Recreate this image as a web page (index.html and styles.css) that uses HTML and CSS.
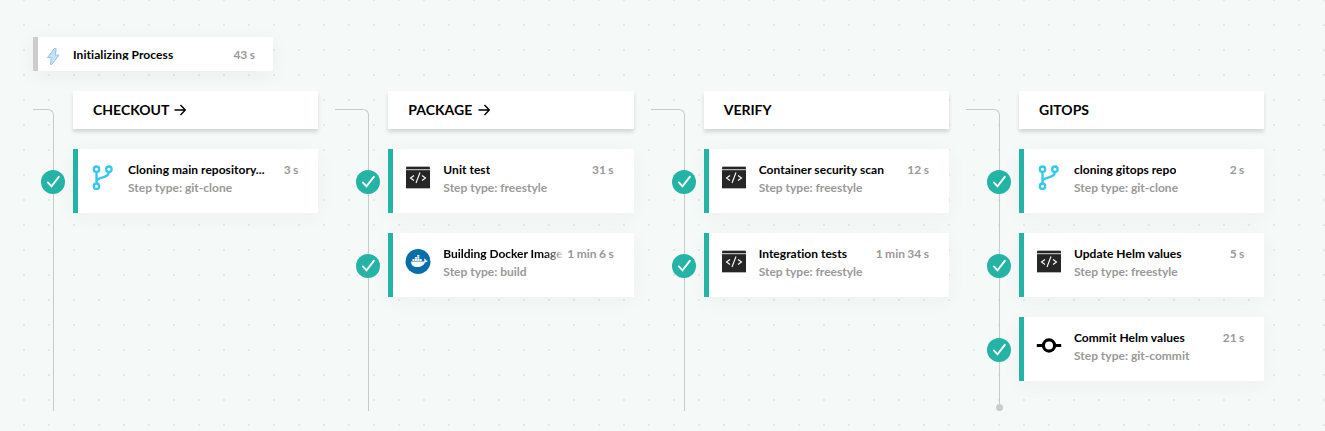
FILE: index.html
```
<!DOCTYPE html>
<html lang="en">
<head>
<meta charset="utf-8">
<title>Pipeline</title>
<link rel="stylesheet" href="styles.css">
</head>
<body>
<svg class="defs" width="0" height="0" aria-hidden="true">
  <symbol id="check" viewBox="0 0 24 24"><circle cx="12" cy="12" r="12" fill="#24b4a5"/><path d="M6.800 12.400l3.700 3.900L17.800 6.800" fill="none" stroke="#fff" stroke-width="1.9" stroke-linecap="round"/></symbol>
  <symbol id="branch" viewBox="0 0 26 26"><g fill="none" stroke="#34c8ee" stroke-width="2.300"><circle cx="6.500" cy="5.200" r="2.700"/><circle cx="18.900" cy="5.200" r="2.700"/><circle cx="6.500" cy="22.200" r="2.700"/><path d="M6.500 8v11.600M18.900 8c0 6.500-10.600 4.500-12.200 8.500"/></g></symbol>
  <symbol id="code" viewBox="0 0 26 26"><path d="M2 2h22a1 1 0 0 1 1 1v22H1V3a1 1 0 0 1 1-1z" fill="#b5b5b5"/><path d="M1.800 3h22.400l.8.800V5H1V3.800zM1 6.200h24V24H1z" fill="#262626"/><path d="M9 11.500l-3.500 2.500 3.500 2.500M17 11.500l3.500 2.500-3.500 2.500M15 8.500l-4 10.500" fill="none" stroke="#fff" stroke-width="1.100"/></symbol>
  <symbol id="docker" viewBox="0 0 26 26"><circle cx="13" cy="13.500" r="12.500" fill="#086dab"/><path transform="translate(0 .7)" d="M6 12.700h13.300c.4-.7.100-1.600-.300-2.300l.7-.6c.9.600 1.300 1.300 1.300 2 .5-.1 1.200 0 1.600.2-.3 1-1.100 1.500-2.500 1.500-1.500 3.300-4 4.700-7.500 4.700-4.300 0-6.500-1.700-6.600-5.500zM7.500 10.300h2v1.900h-2zM9.900 10.300h2v1.900h-2zM12.300 10.300h2v1.900h-2zM14.700 10.300h2v1.900h-2zM9.900 8.300h2v1.700h-2zM12.300 8.300h2v1.700h-2zM12.300 6.300h2V8h-2z" fill="#fff"/></symbol>
  <symbol id="commit" viewBox="0 0 26 26"><circle cx="13" cy="13.500" r="5.600" fill="none" stroke="#000" stroke-width="3.200"/><path d="M.8 13.500h6.500M18.700 13.500h6.500" stroke="#000" stroke-width="3"/></symbol>
</svg>
<main class="board">
  <section class="init">
    <svg class="init-icon" viewBox="0 0 14 20"><path d="M8.300 2.500L1.500 11.500h3.700L4.500 18.500h1.300L13 9H9.300l.9-6.500z" fill="#bde5ff" stroke="#9dbfe3"/></svg>
    <span class="init-title">Initializing Process</span>
    <span class="time">43 s</span>
  </section>
  <div class="stages">
    <section class="stage">
      <div class="rail"></div>
      <div class="steps">
        <h2 class="head">CHECKOUT <svg class="arrow" viewBox="0 0 12 12"><path d="M.5 6h10.500M6.500 1L11.300 6l-4.800 5"/></svg></h2>
        <article class="step"><svg class="status"><use href="#check"/></svg><svg class="icon"><use href="#branch"/></svg><div class="info"><div class="line"><span class="name">Cloning main repository...</span><span class="time">3 s</span></div><div class="type">Step type: git-clone</div></div></article>
      </div>
    </section>
    <section class="stage">
      <div class="rail"></div>
      <div class="steps">
        <h2 class="head">PACKAGE <svg class="arrow" viewBox="0 0 12 12"><path d="M.5 6h10.500M6.500 1L11.300 6l-4.800 5"/></svg></h2>
        <article class="step"><svg class="status"><use href="#check"/></svg><svg class="icon"><use href="#code"/></svg><div class="info"><div class="line"><span class="name">Unit test</span><span class="time">31 s</span></div><div class="type">Step type: freestyle</div></div></article>
        <article class="step"><svg class="status"><use href="#check"/></svg><svg class="icon"><use href="#docker"/></svg><div class="info"><div class="line"><span class="name faded">Building Docker Image</span><span class="time">1 min 6 s</span></div><div class="type">Step type: build</div></div></article>
      </div>
    </section>
    <section class="stage">
      <div class="rail"></div>
      <div class="steps">
        <h2 class="head">VERIFY</h2>
        <article class="step"><svg class="status"><use href="#check"/></svg><svg class="icon"><use href="#code"/></svg><div class="info"><div class="line"><span class="name">Container security scan</span><span class="time">12 s</span></div><div class="type">Step type: freestyle</div></div></article>
        <article class="step"><svg class="status"><use href="#check"/></svg><svg class="icon"><use href="#code"/></svg><div class="info"><div class="line"><span class="name">Integration tests</span><span class="time">1 min 34 s</span></div><div class="type">Step type: freestyle</div></div></article>
      </div>
    </section>
    <section class="stage">
      <div class="rail last"></div>
      <div class="steps">
        <h2 class="head">GITOPS</h2>
        <article class="step"><svg class="status"><use href="#check"/></svg><svg class="icon"><use href="#branch"/></svg><div class="info"><div class="line"><span class="name">cloning gitops repo</span><span class="time">2 s</span></div><div class="type">Step type: git-clone</div></div></article>
        <article class="step"><svg class="status"><use href="#check"/></svg><svg class="icon"><use href="#code"/></svg><div class="info"><div class="line"><span class="name">Update Helm values</span><span class="time">5 s</span></div><div class="type">Step type: freestyle</div></div></article>
        <article class="step"><svg class="status"><use href="#check"/></svg><svg class="icon"><use href="#commit"/></svg><div class="info"><div class="line"><span class="name">Commit Helm values</span><span class="time">21 s</span></div><div class="type">Step type: git-commit</div></div></article>
      </div>
    </section>
  </div>
</main>
</body>
</html>
```
FILE: styles.css
```
* { box-sizing: border-box; }
body {
  margin: 0;
  font: 700 12px/18px Lato, "Liberation Sans", sans-serif;
  color: #000;
}
.defs { display: block; }
.board {
  height: 431px;
  overflow: hidden;
  padding: 37px 33px 0;
  background: linear-gradient(#f5f9f8 23px, transparent 0) 0 1px / 25px 25px,
    linear-gradient(90deg, #f5f9f8 23px, #e0ebe7 0) 0 0 / 25px 25px;
}
.init {
  display: flex;
  width: 240px;
  height: 34px;
  padding: 9px 18px 0 8px;
  border-left: 5px solid #ccc;
  background: #fff;
  box-shadow: 0 4px 20px rgba(0, 0, 0, .05);
}
.init-icon { width: 14px; height: 20px; margin: 0 13px 0 0; }
.init-title { flex: 1; height: 14px; overflow: hidden; letter-spacing: .08px; }
.time { color: #999; white-space: nowrap; word-spacing: -.5px; }
.stages { display: flex; gap: 17px; margin-top: 20px; }
.stage { display: flex; flex: none; height: 320px; }
.rail {
  width: 34px;
  height: 302px;
  margin: 18px 19px 0 0;
  border: solid #c7cccb;
  border-width: 1px 1px 0 0;
  border-top-right-radius: 6px;
}
.stage:first-child .rail { width: 21px; }
.rail.last { display: flex; align-items: flex-end; justify-content: flex-end; }
.rail.last::after {
  content: "";
  width: 7px;
  height: 7px;
  margin-right: -4px;
  border-radius: 50%;
  background: #ccc;
}
.steps { display: flex; flex-direction: column; gap: 20px; width: 245.33px; }
.head {
  height: 38px;
  margin: 0;
  padding-left: 20px;
  background: #fff;
  box-shadow: 0 3px 4px rgba(0, 0, 0, .14);
  font-size: 14px;
  line-height: 38px;
}
.arrow { width: 12px; height: 12px; margin-left: 2px; fill: none; stroke: #000; stroke-width: 1.4; vertical-align: -1px; }
.step {
  position: relative;
  display: flex;
  gap: 12px;
  height: 64px;
  padding: 12px 20px 0 12px;
  border-left: 5px solid #24b4a5;
  background: #fff;
  box-shadow: 0 4px 20px rgba(0, 0, 0, .04);
}
.status { position: absolute; left: -37px; top: 21px; width: 24px; height: 24px; }
.icon { flex: none; width: 26px; height: 26px; margin-top: 3px; }
.info { flex: 1; min-width: 0; }
.line { display: flex; justify-content: space-between; gap: 5px; }
.name { min-width: 0; overflow: hidden; white-space: nowrap; letter-spacing: .04px; }
.faded { letter-spacing: -.04px; mask-image: linear-gradient(90deg, #000 calc(100% - 18px), rgba(0, 0, 0, .15)); }
.type { color: #999; }
```
